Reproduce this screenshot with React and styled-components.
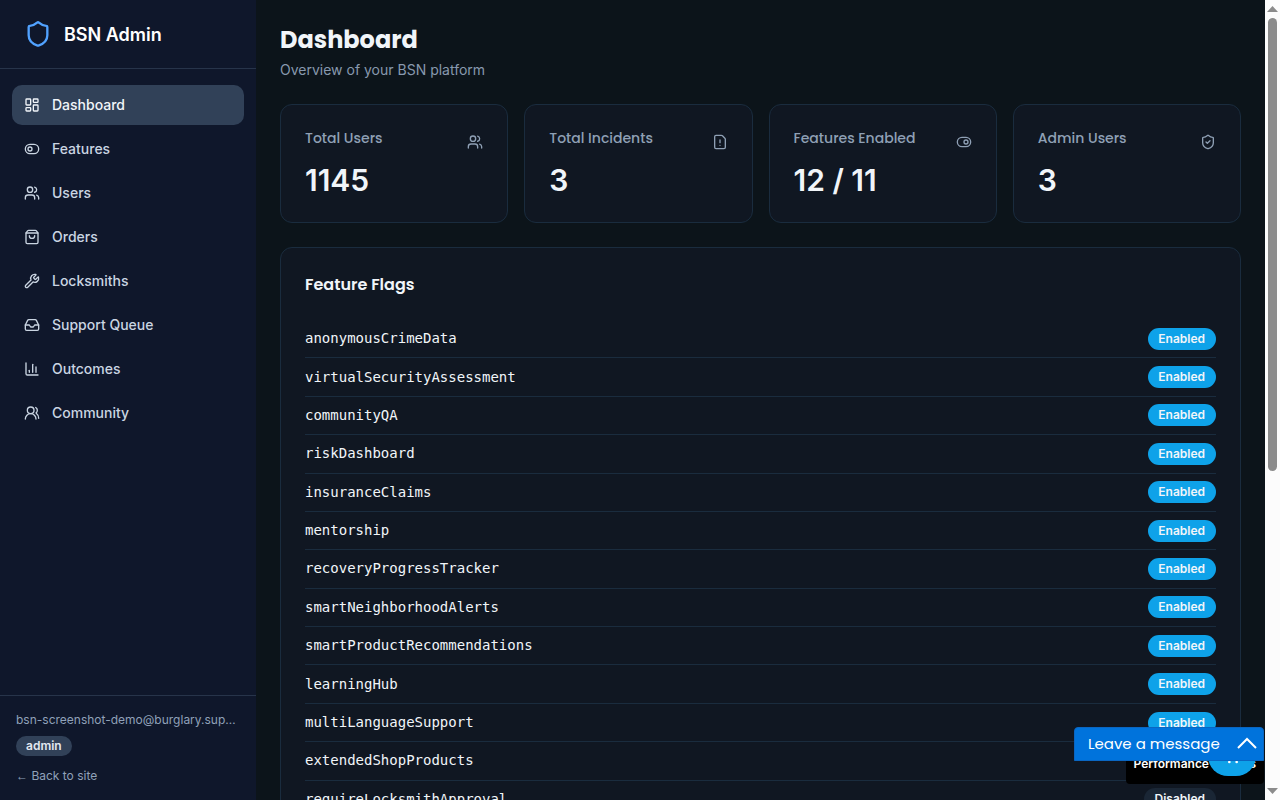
import React from 'react';
import styled, { createGlobalStyle } from 'styled-components';
import {
  ChartColumn,
  FileExclamationPoint,
  Inbox,
  LayoutDashboard,
  Shield,
  ShieldCheck,
  ShoppingBag,
  ShoppingCart,
  ToggleLeft,
  ToggleRight,
  Users,
  UsersRound,
  Wrench,
} from 'lucide-react';

const NAV_ITEMS = [
  { label: 'Dashboard', icon: LayoutDashboard, active: true },
  { label: 'Features', icon: ToggleLeft },
  { label: 'Users', icon: Users },
  { label: 'Orders', icon: ShoppingBag },
  { label: 'Locksmiths', icon: Wrench },
  { label: 'Support Queue', icon: Inbox },
  { label: 'Outcomes', icon: ChartColumn },
  { label: 'Community', icon: UsersRound },
];

const STATS = [
  { label: 'Total Users', value: '1145', icon: Users },
  { label: 'Total Incidents', value: '3', icon: FileExclamationPoint },
  { label: 'Features Enabled', value: '12 / 11', icon: ToggleRight },
  { label: 'Admin Users', value: '3', icon: ShieldCheck },
];

const FLAGS = [
  { name: 'anonymousCrimeData', enabled: true },
  { name: 'virtualSecurityAssessment', enabled: true },
  { name: 'communityQA', enabled: true },
  { name: 'riskDashboard', enabled: true },
  { name: 'insuranceClaims', enabled: true },
  { name: 'mentorship', enabled: true },
  { name: 'recoveryProgressTracker', enabled: true },
  { name: 'smartNeighborhoodAlerts', enabled: true },
  { name: 'smartProductRecommendations', enabled: true },
  { name: 'learningHub', enabled: true },
  { name: 'multiLanguageSupport', enabled: true },
  { name: 'extendedShopProducts', enabled: true },
  { name: 'requireLocksmithApproval', enabled: false },
];

export default function App() {
  return (
    <>
      <GlobalStyle />
      <Shell>
        <Sidebar>
          <Brand>
            <Shield size={28} color="#51a2ff" />
            <BrandName>BSN Admin</BrandName>
          </Brand>
          <Nav>
            {NAV_ITEMS.map(({ label, icon: Icon, active }) => (
              <NavLink key={label} href="#" $active={active}>
                <Icon size={16} />
                {label}
              </NavLink>
            ))}
          </Nav>
          <Account>
            <Email>bsn-screenshot-demo@burglary.support</Email>
            <Role>admin</Role>
            <BackLink href="#">
              <BackArrow>←</BackArrow> Back to site
            </BackLink>
          </Account>
        </Sidebar>

        <Main>
          <header>
            <PageTitle>Dashboard</PageTitle>
            <Subtitle>Overview of your BSN platform</Subtitle>
          </header>

          <StatGrid>
            {STATS.map(({ label, value, icon: Icon }) => (
              <StatCard key={label}>
                <StatHead>
                  <StatLabel>{label}</StatLabel>
                  <Icon size={16} />
                </StatHead>
                <StatValue>{value}</StatValue>
              </StatCard>
            ))}
          </StatGrid>

          <FlagCard>
            <FlagTitle>Feature Flags</FlagTitle>
            <FlagList>
              {FLAGS.map(({ name, enabled }) => (
                <FlagRow key={name}>
                  <FlagName>{name}</FlagName>
                  <Badge $enabled={enabled}>
                    {enabled ? 'Enabled' : 'Disabled'}
                  </Badge>
                </FlagRow>
              ))}
            </FlagList>
          </FlagCard>
        </Main>

        <ScrollRail aria-hidden="true">
          <Arrow viewBox="0 0 15 18">
            <path d="M7.5 6 L13 12 H2 Z" />
          </Arrow>
          <Thumb />
          <Arrow viewBox="0 0 15 18">
            <path d="M7.5 12 L13 6 H2 Z" />
          </Arrow>
        </ScrollRail>
      </Shell>

      <MetricsButton type="button">Performance Metrics</MetricsButton>
      <CartButton type="button" aria-label="Cart">
        <ShoppingCart size={16} />
      </CartButton>
      <MessageButton type="button">
        Leave a message
        <svg width="20" height="12" viewBox="0 0 20 12" fill="none">
          <path d="M1 11 L10 2 L19 11" stroke="#fff" strokeWidth="2" />
        </svg>
      </MessageButton>
    </>
  );
}

const GlobalStyle = createGlobalStyle`
  *, *::before, *::after {
    box-sizing: border-box;
  }

  body {
    margin: 0;
    background: #0c141a;
    color: #f1f5f9;
    font-family: Inter, "Liberation Sans", sans-serif;
    font-size: 14px;
    line-height: 20px;
  }

  h1, h2, h3, p, ul, dl {
    margin: 0;
    padding: 0;
  }

  a {
    color: inherit;
    text-decoration: none;
  }

  button {
    border: 0;
    font-family: inherit;
    cursor: pointer;
  }
`;

const headingFont = 'Poppins, Inter, sans-serif';

const Shell = styled.div`
  display: flex;
  height: 100vh;
  overflow: hidden;
`;

const Sidebar = styled.aside`
  display: flex;
  flex-direction: column;
  flex: none;
  width: 256px;
  background: #0f172b;
`;

const Brand = styled.div`
  display: flex;
  align-items: center;
  gap: 12px;
  padding: 20px 24px;
  border-bottom: 1px solid #27344a;
`;

const BrandName = styled.span`
  padding-top: 2px;
  color: #fff;
  font-size: 18px;
  font-weight: 600;
  line-height: 26px;
`;

const Nav = styled.nav`
  display: flex;
  flex: 1;
  flex-direction: column;
  gap: 4px;
  padding: 16px 12px;
`;

const NavLink = styled.a`
  display: flex;
  align-items: center;
  gap: 12px;
  padding: 10px 12px;
  border-radius: 10px;
  background: ${props => (props.$active ? '#314158' : 'transparent')};
  color: ${props => (props.$active ? '#f1f5f9' : '#cad5e2')};
  font-weight: 500;
`;

const Account = styled.div`
  display: flex;
  flex-direction: column;
  align-items: flex-start;
  padding: 16px;
  border-top: 1px solid #27344a;
  color: #90a1b9;
  font-size: 12px;
  line-height: 16px;
`;

const Email = styled.p`
  width: 100%;
  overflow: hidden;
  text-overflow: ellipsis;
  white-space: nowrap;
`;

const Role = styled.span`
  margin: 8px 0 12px;
  padding: 2px 10px;
  border-radius: 10px;
  background: #314158;
  color: #e2e8f0;
  font-weight: 600;
`;

const BackLink = styled.a`
  color: #90a1b9;
`;

const BackArrow = styled.span`
  font-family: "Liberation Sans", sans-serif;
`;

const Main = styled.main`
  flex: 1;
  min-width: 0;
  padding: 24px;
  overflow-y: auto;
  scrollbar-width: none;
`;

const PageTitle = styled.h1`
  font-family: ${headingFont};
  font-size: 24px;
  font-weight: 700;
  line-height: 32px;
`;

const Subtitle = styled.p`
  margin-top: 4px;
  color: #8899ae;
`;

const StatGrid = styled.section`
  display: grid;
  grid-template-columns: repeat(4, 1fr);
  gap: 16px;
  margin: 24px 0;
`;

const Card = styled.article`
  padding: 24px;
  border: 1px solid #1a2c3e;
  border-radius: 12px;
  background: #101722;
`;

const StatHead = styled.div`
  display: flex;
  align-items: center;
  justify-content: space-between;
  color: #8fa0b5;
`;

const StatLabel = styled.h3`
  padding-bottom: 7px;
  font-family: ${headingFont};
  font-size: 14px;
  font-weight: 500;
  line-height: 18px;
`;

const StatValue = styled.p`
  margin-top: 8px;
  font-size: 30px;
  font-weight: 600;
  line-height: 36px;
`;

const StatCard = styled(Card)`
  padding-bottom: 24px;
`;

const FlagCard = styled(Card)`
  padding-bottom: 24px;
`;

const FlagTitle = styled.h2`
  margin-bottom: 22px;
  font-family: ${headingFont};
  font-size: 16px;
  font-weight: 600;
  line-height: 26px;
`;

const FlagList = styled.ul`
  display: grid;
  grid-auto-rows: 1fr;
  height: 499px;
  list-style: none;
`;

const FlagRow = styled.li`
  display: flex;
  align-items: center;
  justify-content: space-between;
  border-bottom: 1px solid #1a2c3e;
`;

const FlagName = styled.span`
  padding-bottom: 1px;
  font-family: "DejaVu Sans Mono", monospace;
  font-size: 14px;
`;

const Badge = styled.span`
  padding: 3px 11px 3px 10px;
  border-radius: 11px;
  background: ${props => (props.$enabled ? '#0ea2e9' : '#1a2635')};
  color: #f1f5f9;
  font-size: 12px;
  font-weight: 600;
  line-height: 16px;
`;

const ScrollRail = styled.div`
  display: flex;
  flex: none;
  flex-direction: column;
  align-items: center;
  width: 15px;
  background: #fcfcfc;
`;

const Arrow = styled.svg`
  flex: none;
  width: 15px;
  height: 18px;
  fill: #8b8b8b;

  &:last-child {
    margin-top: auto;
  }
`;

const Thumb = styled.div`
  width: 9px;
  height: 56.6%;
  border-radius: 5px;
  background: #8b8b8b;
`;

const MetricsButton = styled.button`
  position: fixed;
  right: 16px;
  bottom: 16px;
  height: 40px;
  padding: 0 8px 2px;
  border-radius: 4px;
  background: #000;
  color: #fff;
  font-size: 12px;
  font-weight: 600;
`;

const CartButton = styled.button`
  position: fixed;
  right: 24px;
  bottom: 24px;
  display: flex;
  align-items: center;
  justify-content: center;
  width: 48px;
  height: 40px;
  border-radius: 20px;
  background: #0ea2e9;
  color: #fff;
`;

const MessageButton = styled.button`
  position: fixed;
  right: 16px;
  bottom: 39px;
  display: flex;
  align-items: center;
  justify-content: space-between;
  width: 190px;
  height: 34px;
  padding: 0 6px 2px 13px;
  border: 1px solid #0a66c2;
  border-radius: 4px 4px 0 0;
  background: #0073dc;
  color: #fff;
  font-family: ${headingFont};
  font-size: 15px;
`;
